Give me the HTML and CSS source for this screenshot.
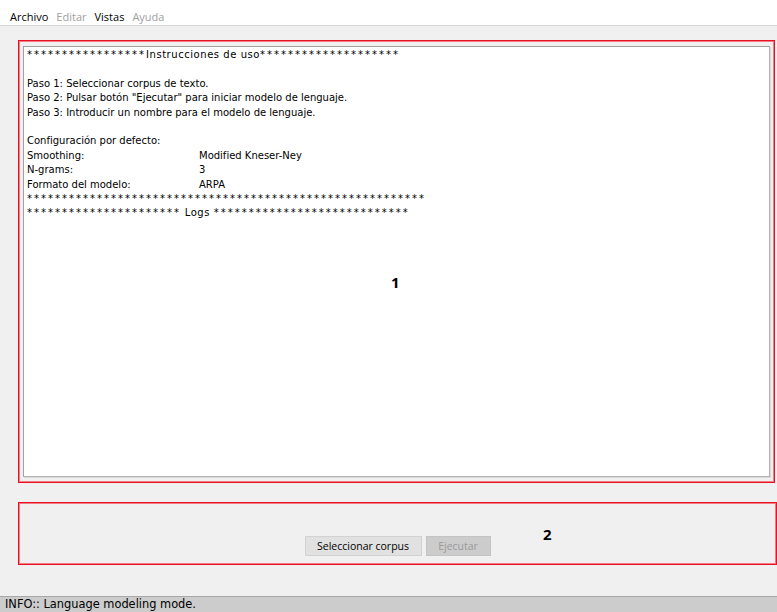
FILE: index.html
```html
<!DOCTYPE html>
<html lang="es">
<head>
<meta charset="utf-8">
<title>Modelo de lenguaje</title>
<link rel="stylesheet" href="styles.css">
</head>
<body>
<div class="window">
  <nav class="menubar">
    <span class="menu-item">Archivo</span>
    <span class="menu-item disabled">Editar</span>
    <span class="menu-item">Vistas</span>
    <span class="menu-item disabled">Ayuda</span>
  </nav>

  <main class="content">
    <section class="panel panel-log">
      <div class="log">
        <div class="line"><span class="stars">*****************</span><span class="wide">Instrucciones de uso</span><span class="stars">********************</span></div>
        <div class="line">&nbsp;</div>
        <div class="line">Paso 1: Seleccionar corpus de texto.</div>
        <div class="line">Paso 2: Pulsar botón "Ejecutar" para iniciar modelo de lenguaje.</div>
        <div class="line">Paso 3: Introducir un nombre para el modelo de lenguaje.</div>
        <div class="line">&nbsp;</div>
        <div class="line">Configuración por defecto:</div>
        <div class="line kv"><span class="key">Smoothing:</span><span>Modified Kneser-Ney</span></div>
        <div class="line kv"><span class="key">N-grams:</span><span>3</span></div>
        <div class="line kv"><span class="key">Formato del modelo:</span><span>ARPA</span></div>
        <div class="line"><span class="stars">*********************************************************</span></div>
        <div class="line"><span class="stars">**********************</span><span class="wide"> Logs </span><span class="stars">****************************</span></div>
      </div>
      <span class="tag tag-1">1</span>
    </section>

    <section class="panel panel-actions">
      <div class="buttons">
        <button class="btn btn-corpus">Seleccionar corpus</button>
        <button class="btn btn-run" disabled>Ejecutar</button>
      </div>
      <span class="tag tag-2">2</span>
    </section>
  </main>

  <footer class="statusbar">INFO:: Language modeling mode.</footer>
</div>
</body>
</html>
```

FILE: styles.css
```css
* {
  box-sizing: border-box;
}

html, body {
  margin: 0;
  padding: 0;
  background: #f0f0f0;
}

.window {
  width: 777px;
  height: 612px;
  display: flex;
  flex-direction: column;
  font-family: "Open Sans", "Noto Sans", sans-serif;
  font-size: 12px;
  color: #000;
}

/* menu bar */
.menubar {
  height: 26px;
  flex: none;
  background: #ffffff;
  border-bottom: 1px solid #d6d6d6;
  display: flex;
  align-items: center;
  gap: 8px;
  padding: 7px 0 0 10px;
  font-size: 11px;
}

.menu-item.disabled {
  color: #a0a0a0;
}

/* main area */
.content {
  flex: 1;
  display: flex;
  flex-direction: column;
  padding: 14px 2px 0 18px;
  gap: 19px;
}

.panel {
  position: relative;
  border: 1px solid #e81123;
  box-shadow: inset 0 0 0 1px #f47d85;
}

.panel-log {
  width: 757px;
  height: 443px;
  padding: 5px 4px 5px 4px;
  display: flex;
}

.log {
  flex: 1;
  background: #ffffff;
  border: 1px solid #a0a0a0;
  border-right-color: #b4b4b4;
  border-bottom-color: #b4b4b4;
  box-shadow: 1px 1px 0 #d8d8d8;
  padding: 1px 3px;
  font-family: "DejaVu Sans", sans-serif;
  font-size: 10px;
  line-height: 14.4px;
  overflow: hidden;
}

.line {
  white-space: pre;
}

.stars {
  letter-spacing: 2px;
}

.wide {
  letter-spacing: 0.55px;
}

.kv {
  display: flex;
}

.kv .key {
  width: 172px;
}

.panel-actions {
  width: 759px;
  height: 63px;
  display: flex;
  align-items: flex-end;
  justify-content: center;
  padding-bottom: 8px;
}

.buttons {
  display: flex;
  gap: 4px;
}

.btn {
  height: 20px;
  margin: 0;
  padding: 0;
  font-family: "Open Sans", "Noto Sans", sans-serif;
  font-size: 10.5px;
  white-space: nowrap;
  color: #000;
  background: #e1e1e1;
  border: 1px solid #d2d2d2;
  border-radius: 0;
}

.btn-corpus {
  width: 117px;
}

.btn-run {
  width: 65px;
}

.btn:disabled {
  background: #cccccc;
  border-color: #c4c4c4;
  color: #9a9a9a;
}

/* numbered annotation labels */
.tag {
  position: absolute;
  font-family: "Open Sans", sans-serif;
  font-weight: 700;
  font-size: 15px;
  line-height: 1;
}

.tag-1 {
  left: 372px;
  top: 234px;
}

.tag-2 {
  left: 524px;
  top: 24px;
}

/* status bar */
.statusbar {
  height: 16px;
  flex: none;
  background: #cccccc;
  border-top: 1px solid #a8a8a8;
  padding: 0 0 0 5px;
  font-family: "DejaVu Sans", sans-serif;
  font-size: 11.4px;
  line-height: 15px;
  white-space: nowrap;
}
```
